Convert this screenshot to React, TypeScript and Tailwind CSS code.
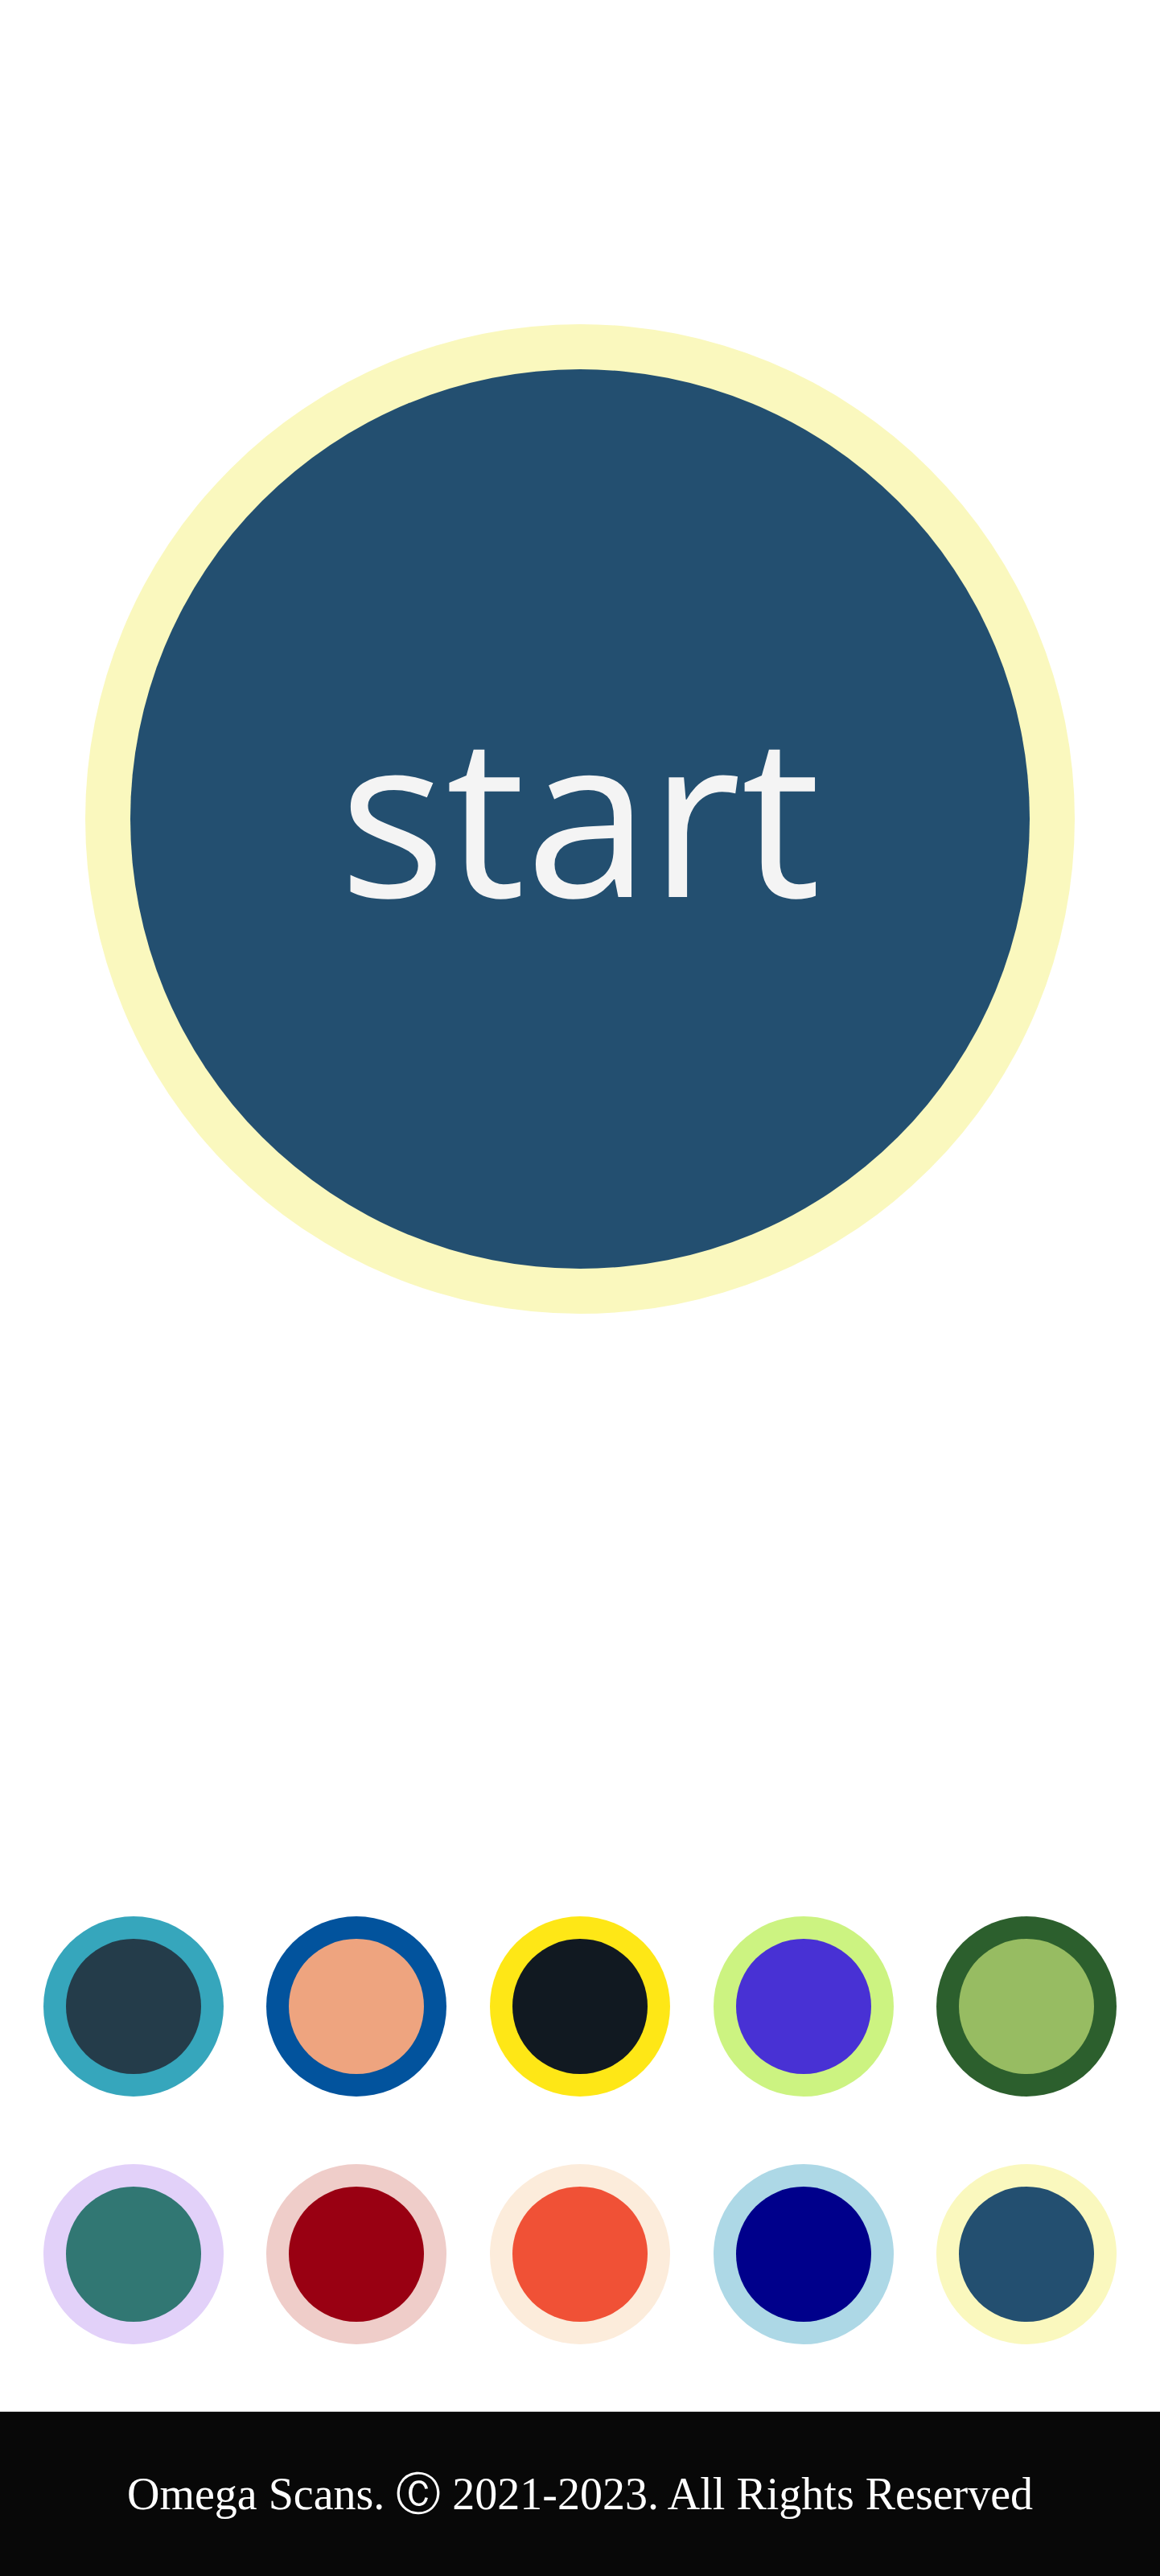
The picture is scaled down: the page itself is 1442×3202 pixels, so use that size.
import React from 'react'

interface Swatch {
  ring: string
  fill: string
}

const swatches: Swatch[] = [
  { ring: 'bg-[#36a6bc]', fill: 'bg-[#243c4a]' },
  { ring: 'bg-[#02539d]', fill: 'bg-[#eea47f]' },
  { ring: 'bg-[#fee716]', fill: 'bg-[#111921]' },
  { ring: 'bg-[#ccf381]', fill: 'bg-[#4831d4]' },
  { ring: 'bg-[#2c5f2d]', fill: 'bg-[#97bc62]' },
  { ring: 'bg-[#e2d1f9]', fill: 'bg-[#317773]' },
  { ring: 'bg-[#efcdc9]', fill: 'bg-[#990012]' },
  { ring: 'bg-[#fcecdb]', fill: 'bg-[#f05136]' },
  { ring: 'bg-[#add8e6]', fill: 'bg-[#00008b]' },
  { ring: 'bg-[#faf8be]', fill: 'bg-[#234f70]' },
]

function ThemeDot({ ring, fill }: Swatch) {
  return (
    <button className={`flex h-[224px] w-[224px] items-center justify-center rounded-full ${ring}`}>
      <span className={`block h-[168px] w-[168px] rounded-full ${fill}`} />
    </button>
  )
}

export default function App() {
  return (
    <div className="flex min-h-[3202px] w-full flex-col bg-white">
      <main className="flex flex-1 flex-col items-center pt-[403px]">
        <button className="flex h-[1230px] w-[1230px] items-center justify-center rounded-full bg-[#faf8be]">
          <span className="flex h-[1118px] w-[1118px] items-center justify-center rounded-full bg-[#234f70]">
            <span
              className="pb-[22px] text-[278px] leading-none text-[#f4f4f4]"
              style={{ fontFamily: '"Open Sans", "Noto Sans", sans-serif' }}
            >
              start
            </span>
          </span>
        </button>

        <div className="mt-[749px] grid w-full grid-rows-2 gap-y-[84px]">
          <div className="flex justify-evenly">
            {swatches.slice(0, 5).map((s, i) => (
              <ThemeDot key={i} {...s} />
            ))}
          </div>
          <div className="flex justify-evenly">
            {swatches.slice(5).map((s, i) => (
              <ThemeDot key={i} {...s} />
            ))}
          </div>
        </div>
      </main>

      <footer className="mt-[82px] flex h-[205px] items-center justify-center border-t border-[#c9c9c9] bg-[#080808]">
        <p
          className="text-[56px] leading-none text-white"
          style={{ fontFamily: '"Liberation Serif", "Times New Roman", "DejaVu Serif", serif' }}
        >
          Omega Scans. Ⓒ 2021-2023. All Rights Reserved
        </p>
      </footer>
    </div>
  )
}
